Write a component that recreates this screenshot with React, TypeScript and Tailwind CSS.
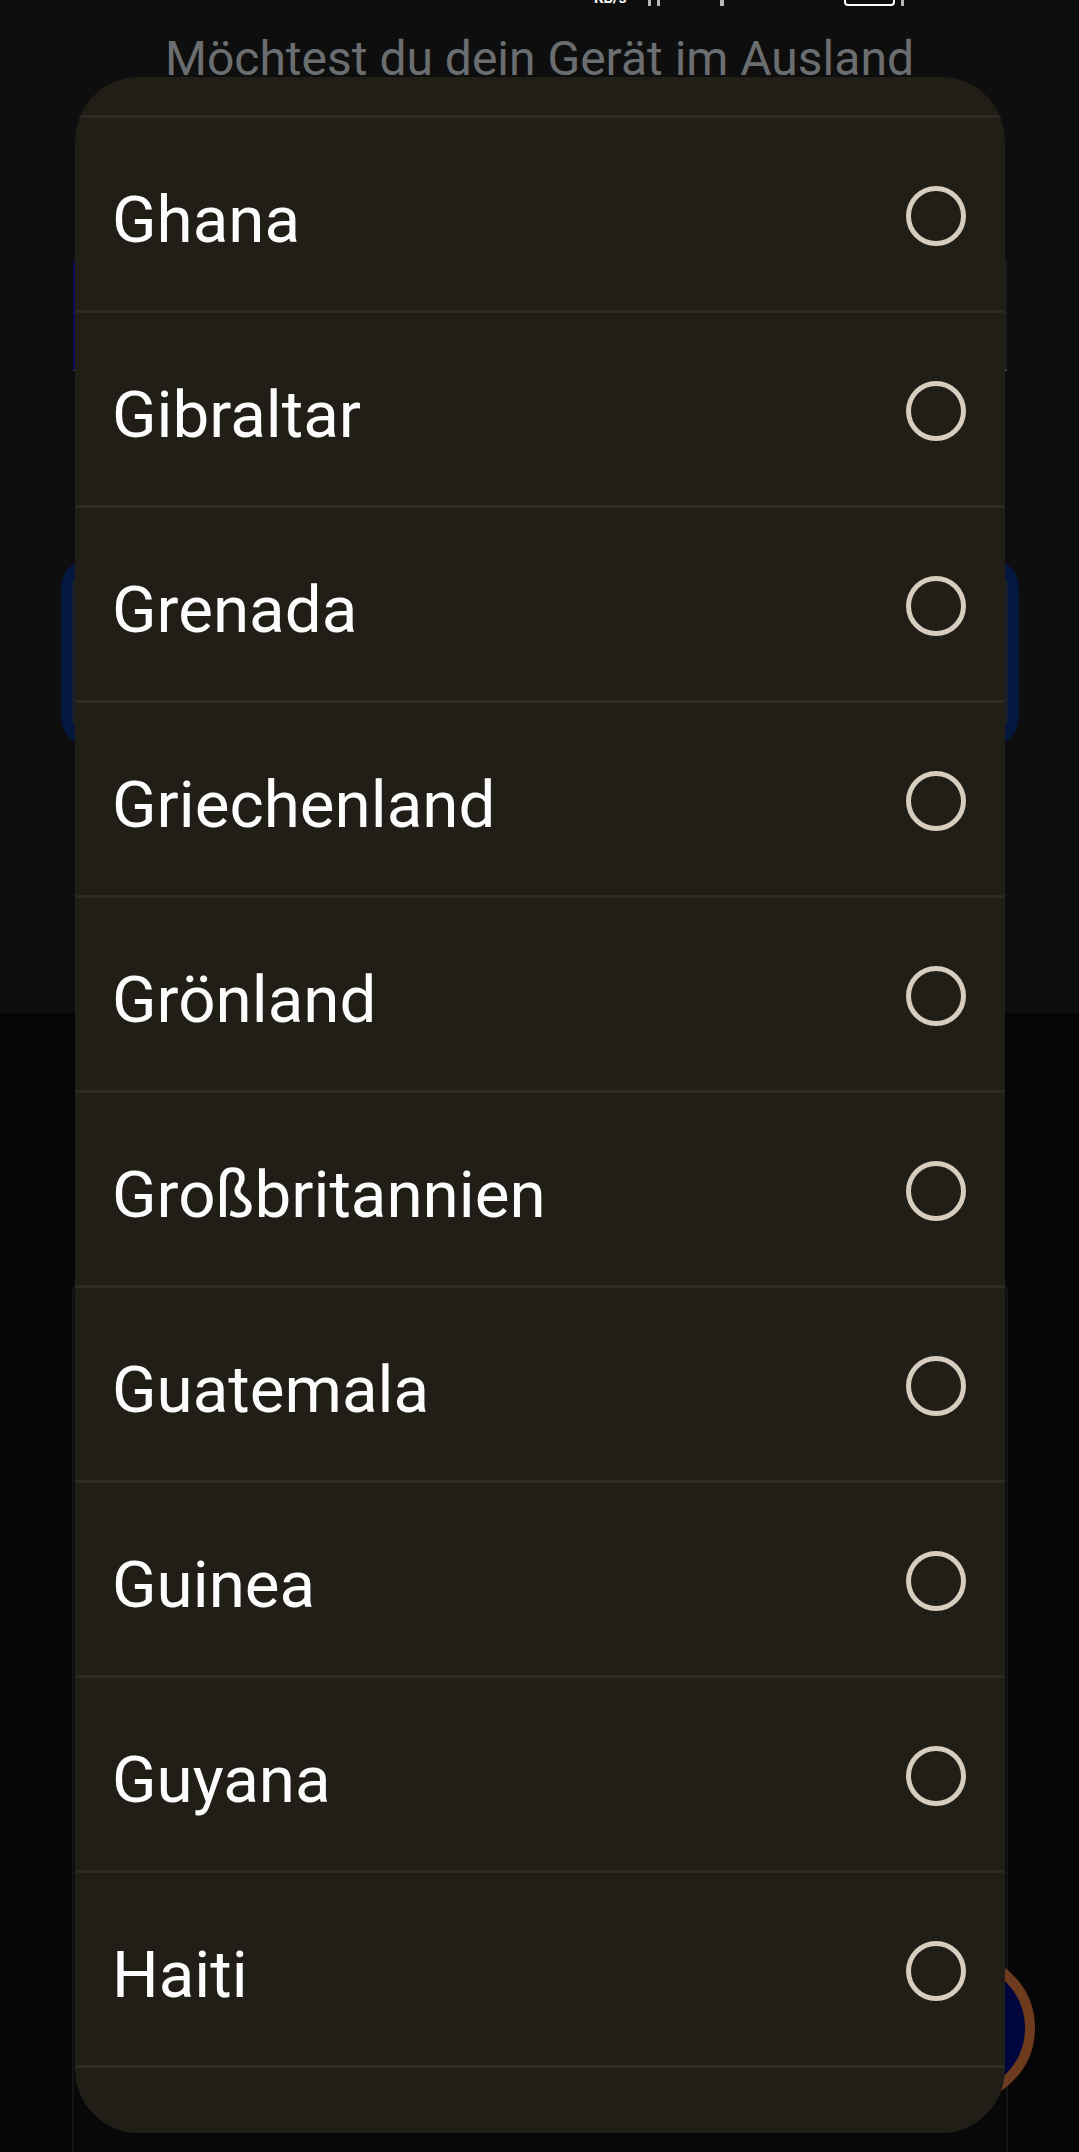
const countries = [
  'Georgien',
  'Ghana',
  'Gibraltar',
  'Grenada',
  'Griechenland',
  'Grönland',
  'Großbritannien',
  'Guatemala',
  'Guinea',
  'Guyana',
  'Haiti',
  'Honduras',
]

function StatusBar() {
  // only the lower few pixels of the status bar are visible
  return (
    <div className="-mt-[16px] flex h-[22px] items-end pl-[594px] text-white">
      <span className="text-[15px] font-bold leading-none">KB/s</span>
      <span className="ml-[22px] h-[10px] w-[3px] bg-white/70" />
      <span className="ml-[6px] h-[10px] w-[3px] bg-white/70" />
      <span className="ml-[60px] h-[8px] w-[4px] bg-white/70" />
      <span className="ml-[120px] h-[18px] w-[51px] rounded-[4px] border-2 border-white" />
      <span className="ml-[6px] h-[8px] w-[3px] bg-white/70" />
    </div>
  )
}

function Background() {
  return (
    <div className="flex h-[2152px] flex-col">
      {/* obere Fläche der App */}
      <div className="flex h-[1013px] shrink-0 flex-col overflow-hidden bg-[#0e0e0e]">
        <StatusBar />
        <p className="mt-[25px] text-center text-[48px] leading-[56px] text-[#6b6e71]">
          Möchtest du dein Gerät im Ausland
          <br />
          verwenden?
        </p>
        <div className="mt-[118px] ml-[73px] h-[110px] w-[934px] border-b-2 border-l-[3px] border-r-2 border-b-[#5a5a5a] border-l-[#0b0b55] border-r-[#1b1b1b]" />
        <div className="mt-[187px] ml-[61px] h-[189px] w-[958px] rounded-[30px] border-[11px] border-[#06173f] bg-[#1b1e2b]" />
      </div>

      {/* untere Fläche */}
      <div className="flex min-h-0 flex-1 flex-col overflow-hidden bg-[#060606]">
        <div className="mt-[254px] ml-[72px] h-[1000px] w-[936px] shrink-0 rounded-[28px] border-2 border-[#141414] bg-[#080808]" />
      </div>
    </div>
  )
}

export default function App() {
  return (
    <div className="relative h-[2152px] w-full overflow-hidden bg-[#0e0e0e] font-['Roboto',sans-serif]">
      <Background />

      {/* Floating Button hinter dem Dialog */}
      <div className="absolute left-[885px] top-[1953px] h-[150px] w-[150px] rounded-full border-[10px] border-[#6f3b1f] bg-[#01063f]" />

      {/* Länderauswahl */}
      <div className="absolute left-[75px] top-[77px] h-[2056px] w-[930px] overflow-hidden rounded-[64px] bg-[#211e18]">
        <div className="-mt-[154px] flex flex-col">
          {countries.map((c) => (
            <div
              key={c}
              className="flex h-[195px] items-center justify-between border-b-[3px] border-[#2d2a24] pl-[37px] pr-[39px]"
            >
              <span className="pt-[11px] text-[65.5px] leading-none text-[#fcfcfc]">{c}</span>
              <span className="mt-[3px] h-[60px] w-[60px] rounded-full border-[5px] border-[#d6cdbf]" />
            </div>
          ))}
        </div>
      </div>
    </div>
  )
}
